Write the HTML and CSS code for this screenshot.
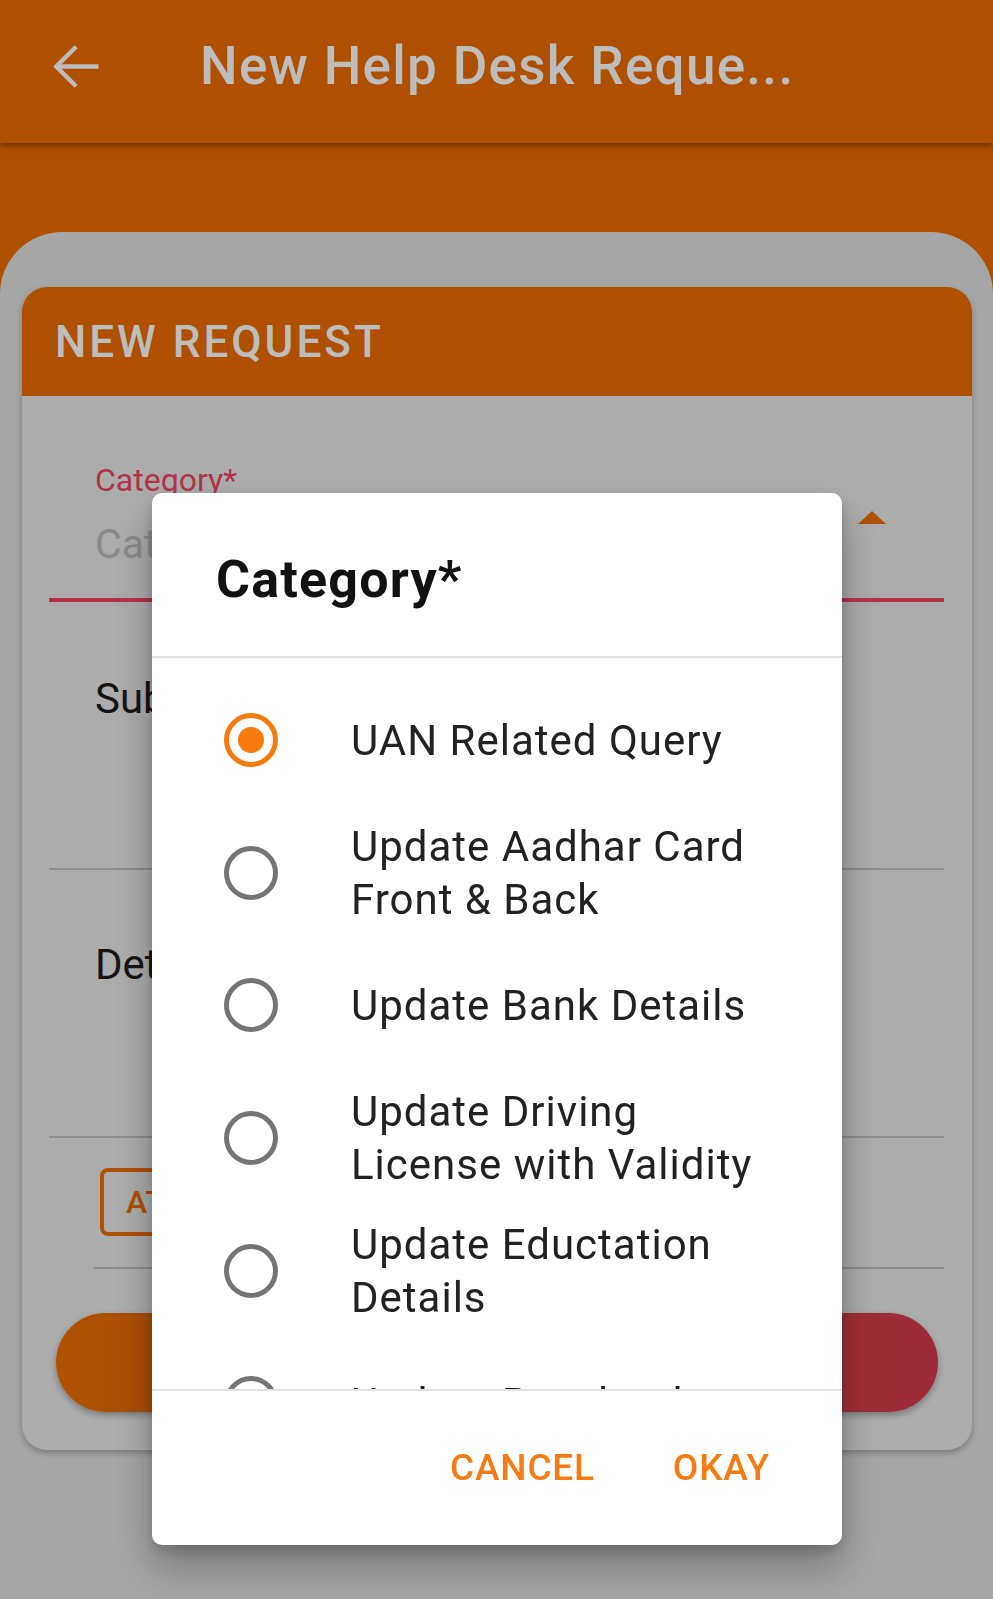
FILE: index.html
```html
<!DOCTYPE html>
<html lang="en">
<head>
<meta charset="utf-8">
<title>New Help Desk Request</title>
<link rel="stylesheet" href="styles.css">
</head>
<body>
<div class="app">
  <header class="appbar">
    <div class="toolbar">
      <svg class="back" viewBox="0 0 24 24" aria-hidden="true"><path d="M20 12H5.6M12.2 5.1 5.3 12l6.9 6.9"/></svg>
      <h1 class="title">New Help Desk Reque...</h1>
    </div>
  </header>
  <main class="sheet">
    <section class="card">
      <div class="card-head">NEW REQUEST</div>
      <div class="card-body">
        <div class="field field-select">
          <div class="select-main">
            <div class="field-label">Category*</div>
            <div class="placeholder">Category</div>
          </div>
          <span class="caret"></span>
        </div>
        <div class="field field-text field-subject"><span class="hint">Subject</span></div>
        <div class="field field-text field-details"><span class="hint">Details</span></div>
        <div class="attach-row"><span class="attach">ATTACH FILE</span></div>
        <div class="submit">SUBMIT</div>
      </div>
    </section>
  </main>
</div>
<div class="scrim"></div>
<div class="dialog" role="dialog">
  <div class="dialog-title">Category*</div>
  <div class="dialog-list">
    <div class="option"><span class="radio checked"></span><span class="option-text">UAN Related Query</span></div>
    <div class="option"><span class="radio"></span><span class="option-text">Update Aadhar Card<br>Front &amp; Back</span></div>
    <div class="option"><span class="radio"></span><span class="option-text">Update Bank Details</span></div>
    <div class="option"><span class="radio"></span><span class="option-text">Update Driving<br>License with Validity</span></div>
    <div class="option"><span class="radio"></span><span class="option-text">Update Eductation<br>Details</span></div>
    <div class="option"><span class="radio"></span><span class="option-text">Update Passbook</span></div>
  </div>
  <div class="dialog-actions">
    <span class="action">CANCEL</span>
    <span class="action">OKAY</span>
  </div>
</div>
</body>
</html>
```
FILE: styles.css
```css
* { box-sizing: border-box; }
html, body { margin: 0; padding: 0; }
body {
  font-family: Roboto, "Noto Sans", "Liberation Sans", sans-serif;
  background: #e0e0e0;
  width: 993px;
  height: 1599px;
  overflow: hidden;
}
.app {
  background: #eb6c00;
  min-height: 1599px;
  display: flex;
  flex-direction: column;
}
.appbar {
  height: 143px;
  background: #eb6c00;
  box-shadow: 0 3px 6px rgba(0,0,0,0.35);
  position: relative;
  z-index: 1;
}
.toolbar {
  height: 132px;
  display: flex;
  align-items: center;
}
.back {
  width: 69px;
  height: 69px;
  margin-left: 41px;
  fill: none;
  stroke: #ffffff;
  stroke-width: 1.5;
}
.title {
  margin: 0 0 0 90px;
  font-size: 53px;
  font-weight: 500;
  color: #ffffff;
  letter-spacing: 1.3px;
}
.sheet {
  flex: 1;
  margin-top: 89px;
  background: #e0e0e0;
  border-radius: 62px 62px 0 0;
  padding: 55px 21px 0 22px;
}
.card {
  border-radius: 25px;
  background: #e8e8e8;
  box-shadow: 0 3px 6px rgba(0,0,0,0.25);
  overflow: hidden;
}
.card-head {
  height: 109px;
  background: #eb6c00;
  color: #ffffff;
  font-size: 44px;
  font-weight: 500;
  letter-spacing: 3px;
  display: flex;
  align-items: center;
  padding-left: 33px;
}
.card-body {
  padding: 66px 28px 38px 27px;
}
.field-select {
  display: flex;
  padding-left: 46px;
  padding-right: 58px;
  border-bottom: 4px solid #ee4664;
  padding-bottom: 30px;
}
.select-main { flex: 1; }
.field-label {
  color: #ee4664;
  font-size: 32px;
  line-height: 36px;
}
.placeholder {
  margin-top: 22px;
  color: #bbbbbb;
  font-size: 41px;
  line-height: 48px;
}
.caret {
  width: 0;
  height: 0;
  border-left: 14px solid transparent;
  border-right: 14px solid transparent;
  border-bottom: 13px solid #f06f00;
  margin-top: 49px;
}
.field-text {
  padding-left: 46px;
  border-bottom: 2px solid #c0c0c0;
  color: #1c1c1c;
  font-size: 42px;
  line-height: 50px;
}
.field-subject { padding-top: 72px; height: 268px; }
.field-details { padding-top: 70px; height: 268px; }
.attach-row {
  margin-left: 45px;
  padding: 30px 0 31px 6px;
  border-bottom: 2px solid #c0c0c0;
}
.attach {
  display: inline-flex;
  align-items: center;
  height: 68px;
  padding: 0 22px;
  border: 4px solid #eb6c00;
  border-radius: 8px;
  color: #eb6c00;
  font-size: 32px;
  font-weight: 500;
}
.submit {
  margin: 44px 6px 0 7px;
  height: 99px;
  border-radius: 50px;
  background: linear-gradient(90deg, #eb6f00, #d33951);
  color: #ffffff;
  font-size: 40px;
  font-weight: 500;
  display: flex;
  align-items: center;
  justify-content: center;
  box-shadow: 0 3px 6px rgba(0,0,0,0.3);
}
.scrim {
  position: fixed;
  inset: 0;
  z-index: 10;
  background: rgba(0,0,0,0.26);
}
.dialog {
  position: fixed;
  z-index: 11;
  left: 152px;
  top: 493px;
  width: 690px;
  height: 1052px;
  background: #ffffff;
  border-radius: 10px;
  box-shadow: 0 22px 40px rgba(0,0,0,0.3), 0 6px 12px rgba(0,0,0,0.15);
  display: flex;
  flex-direction: column;
  overflow: hidden;
}
.dialog-title {
  height: 165px;
  flex: none;
  border-bottom: 2px solid #e2e2e2;
  padding: 57px 0 0 64px;
  font-size: 52px;
  line-height: 60px;
  font-weight: 700;
  letter-spacing: 1.2px;
  color: #111111;
}
.dialog-list {
  height: 731px;
  flex: none;
  overflow: hidden;
  padding-top: 16px;
}
.option {
  height: 132.6px;
  display: flex;
  align-items: center;
}
.radio {
  flex: none;
  width: 54px;
  height: 54px;
  margin-left: 72px;
  border-radius: 50%;
  border: 5px solid #757575;
  display: flex;
  align-items: center;
  justify-content: center;
}
.radio.checked { border-color: #f77a0f; }
.radio.checked::after {
  content: "";
  width: 26px;
  height: 26px;
  border-radius: 50%;
  background: #f77a0f;
}
.option-text {
  margin-left: 73px;
  font-size: 42px;
  line-height: 53px;
  letter-spacing: 1px;
  color: #222222;
}
.dialog-actions {
  flex: 1;
  border-top: 2px solid #e2e2e2;
  display: flex;
  justify-content: flex-end;
  align-items: center;
  gap: 78px;
  padding: 0 72px 2px 0;
}
.action {
  font-size: 37px;
  font-weight: 500;
  color: #f57c14;
  letter-spacing: 0.8px;
}
```
